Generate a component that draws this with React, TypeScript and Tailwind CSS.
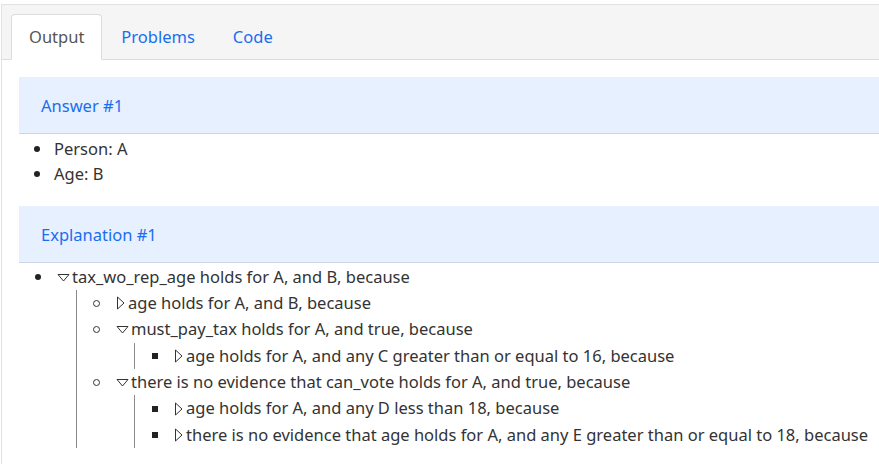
const font = { fontFamily: '"Noto Sans", "Open Sans", sans-serif' };

type Node = {
  text: string;
  open?: boolean;
  children?: Node[];
};

const tree: Node = {
  text: "tax_wo_rep_age holds for A, and B, because",
  open: true,
  children: [
    { text: "age holds for A, and B, because" },
    {
      text: "must_pay_tax holds for A, and true, because",
      open: true,
      children: [{ text: "age holds for A, and any C greater than or equal to 16, because" }],
    },
    {
      text: "there is no evidence that can_vote holds for A, and true, because",
      open: true,
      children: [
        { text: "age holds for A, and any D less than 18, because" },
        {
          text: "there is no evidence that age holds for A, and any E greater than or equal to 18, because",
        },
      ],
    },
  ],
};

const Down = () => (
  <svg width="13" height="9" viewBox="0 0 13 9" className="mr-[2px] shrink-0">
    <path d="M1 1.5 H12 L6.5 8 Z" fill="none" stroke="#333" strokeWidth="1" strokeLinejoin="round" />
  </svg>
);

const Right = () => (
  <svg width="9" height="14" viewBox="0 0 9 14" className="mr-[3px] shrink-0">
    <path d="M1.5 1 V13 L8 7 Z" fill="none" stroke="#333" strokeWidth="1" strokeLinejoin="round" />
  </svg>
);

const Marker = ({ level }: { level: number }) => {
  if (level === 0) return <span className="w-[6px] h-[6px] rounded-full bg-[#222]" />;
  if (level === 1) return <span className="w-[7px] h-[7px] rounded-full border border-[#333]" />;
  return <span className="w-[6px] h-[6px] bg-[#222]" />;
};

const Item = ({ node, level }: { node: Node; level: number }) => (
  <li>
    <div className="flex items-center h-[26.3px]">
      <span className={`${level === 0 ? "w-[38px]" : "w-[39px]"} flex justify-center shrink-0`}>
        <Marker level={level} />
      </span>
      {node.open ? <Down /> : <Right />}
      <span className="whitespace-nowrap">{node.text}</span>
    </div>
    {node.children && (
      <ul className="ml-[57px] border-l border-[#8a8a8a]">
        {node.children.map((c) => (
          <Item key={c.text} node={c} level={level + 1} />
        ))}
      </ul>
    )}
  </li>
);

const Header = ({ title }: { title: string }) => (
  <div className="bg-[#e7f0fe] border-b border-[#cdd6e3] pt-[17px] pb-[15px] px-[22px] leading-6 text-[#1a6df0]">
    {title}
  </div>
);

export default function App() {
  return (
    <div className="w-full h-[464px] overflow-hidden bg-white text-[16.5px] text-[#333]" style={font}>
      <div className="pt-[4px] pl-[1px]">
        <div className="w-[920px] border-t border-l border-[#e2e2e2] h-[470px]">
          <div className="bg-[#f5f5f5] border-b border-[#dcdcdc] pt-[9px] pl-[9px] flex h-[55px]">
            <div className="bg-white border border-[#dcdcdc] border-b-white rounded-t-[4px] px-[17px] py-[10px] leading-6 text-[#555] h-[46px]">
              Output
            </div>
            <div className="px-[19px] py-[11px] leading-6 text-[#1a6df0]">Problems</div>
            <div className="px-[19px] py-[11px] leading-6 text-[#1a6df0]">Code</div>
          </div>
          <div className="pt-[17px] pl-[17px]">
            <Header title="Answer #1" />
            <ul className="pt-[3px] leading-6">
              {["Person: A", "Age: B"].map((t) => (
                <li key={t} className="flex items-center h-[24.5px]">
                  <span className="w-[35px] flex justify-center">
                    <Marker level={0} />
                  </span>
                  <span>{t}</span>
                </li>
              ))}
            </ul>
            <div className="mt-[20px]">
              <Header title="Explanation #1" />
              <ul className="pt-[1px]">
                <Item node={tree} level={0} />
              </ul>
            </div>
          </div>
        </div>
      </div>
    </div>
  );
}
